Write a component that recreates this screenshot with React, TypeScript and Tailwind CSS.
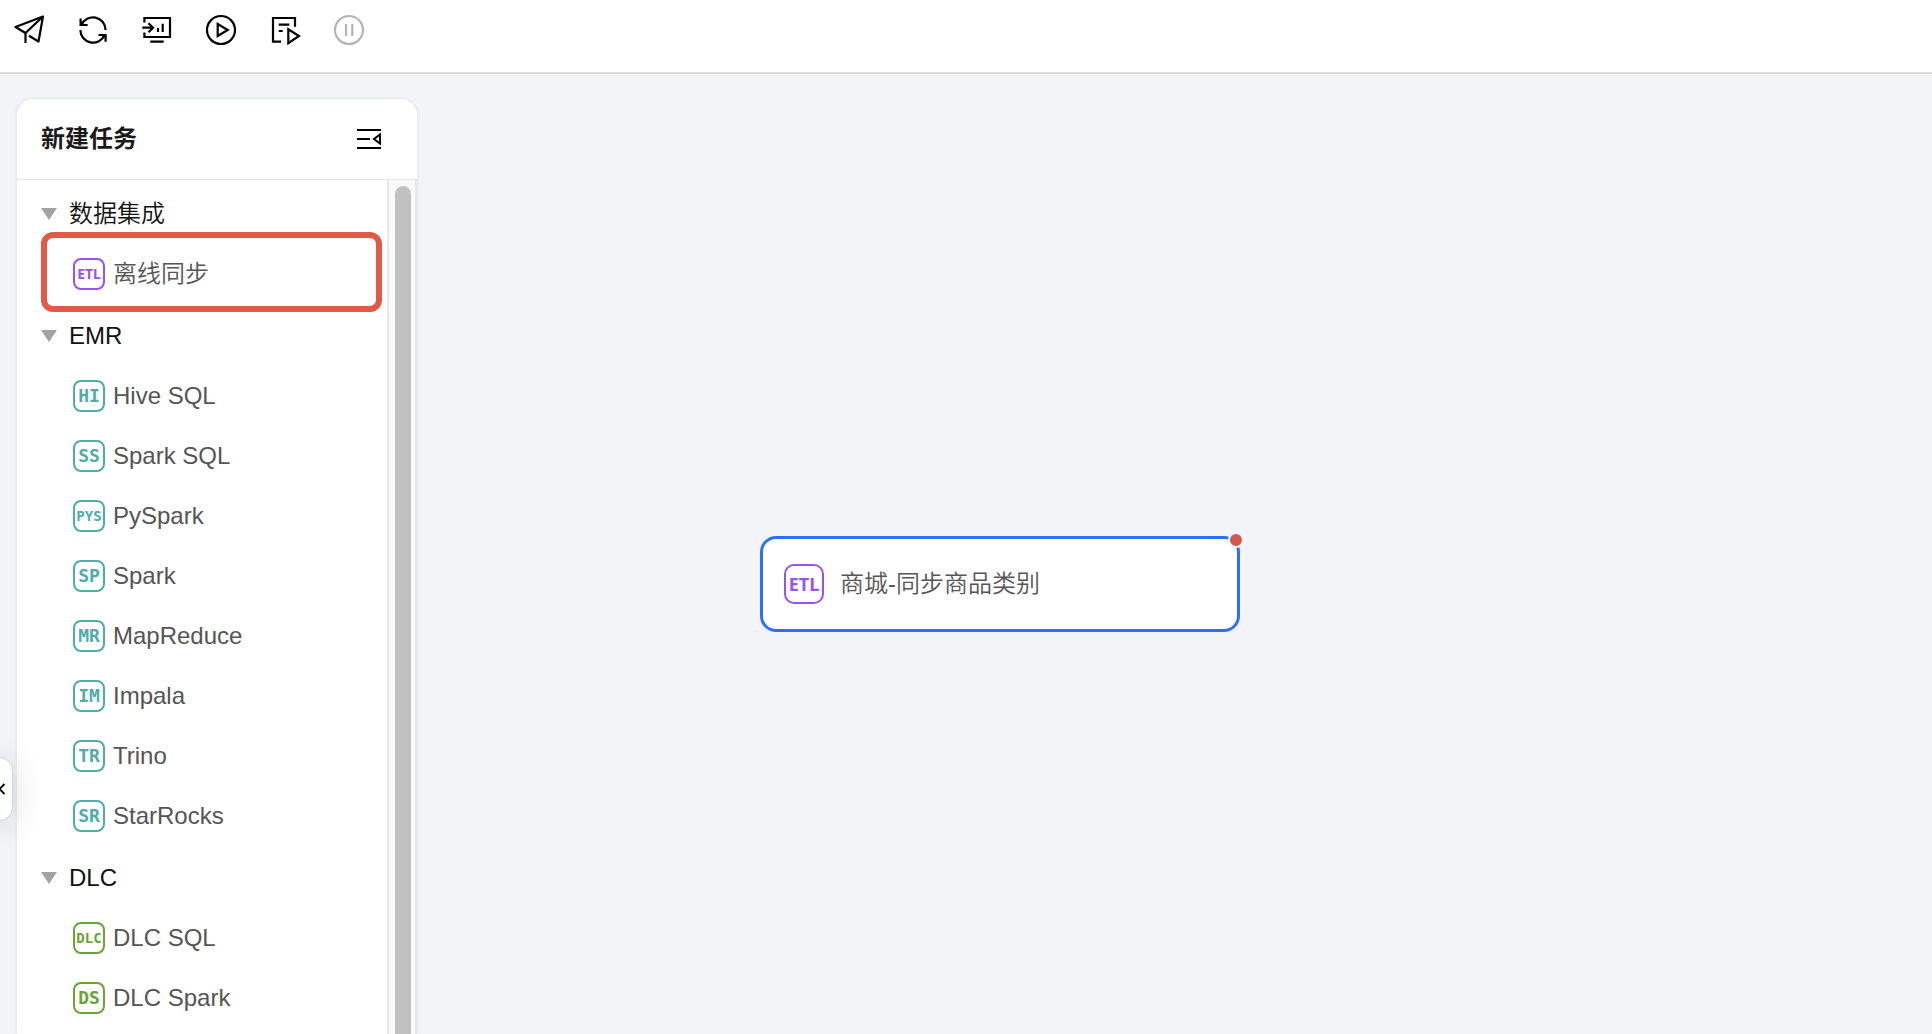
import { ReactNode, useState } from "react";

type Task = { tag: string; name: string; highlighted?: boolean };
type Group = { title: string; color: string; tasks: Task[] };

const groups: Group[] = [
  {
    title: "数据集成",
    color: "border-[#9b51f0] text-[#9b51f0]",
    tasks: [{ tag: "ETL", name: "离线同步", highlighted: true }],
  },
  {
    title: "EMR",
    color: "border-[#4cada9] text-[#4cada9]",
    tasks: [
      { tag: "HI", name: "Hive SQL" },
      { tag: "SS", name: "Spark SQL" },
      { tag: "PYS", name: "PySpark" },
      { tag: "SP", name: "Spark" },
      { tag: "MR", name: "MapReduce" },
      { tag: "IM", name: "Impala" },
      { tag: "TR", name: "Trino" },
      { tag: "SR", name: "StarRocks" },
    ],
  },
  {
    title: "DLC",
    color: "border-[#6aa436] text-[#6aa436]",
    tasks: [
      { tag: "DLC", name: "DLC SQL" },
      { tag: "DS", name: "DLC Spark" },
    ],
  },
];

function tagFont(tag: string) {
  if (tag === "ETL") return "font-['Noto_Sans',sans-serif] text-[14px]";
  if (tag.length > 2) return "font-['DejaVu_Sans_Mono',monospace] text-[14px]";
  return "font-['DejaVu_Sans_Mono',monospace] text-[18px]";
}

function ToolButton({
  label,
  disabled,
  children,
}: {
  label: string;
  disabled?: boolean;
  children: ReactNode;
}) {
  return (
    <button
      type="button"
      aria-label={label}
      disabled={disabled}
      className="size-8 text-black disabled:text-[#b5b5b5]"
    >
      <svg
        viewBox="0 0 32 32"
        className="size-8"
        fill="none"
        stroke="currentColor"
        strokeWidth="2.2"
      >
        {children}
      </svg>
    </button>
  );
}

function Toolbar() {
  return (
    <header className="flex h-[74px] shrink-0 items-start gap-8 border-b-2 border-[#dcdcdc] bg-white pt-[14px] pl-[13px]">
      <ToolButton label="提交">
        <path
          d="M12.5 29V19L30 2.5 2.5 13l10 6M30 2.5l-4.5 25-9.5-5.7"
          strokeLinejoin="round"
        />
      </ToolButton>
      <ToolButton label="刷新">
        <path d="M3.6 4.5V11h7M4.4 11A12.6 12.6 0 0 1 28.6 16M3.4 16A12.6 12.6 0 0 0 27.6 21M21.5 21h7.1v6.8" />
      </ToolButton>
      <ToolButton label="导入">
        <path d="M3.4 8.6V4H29v19H3.4v-4.6M1.3 13.7H12M7.5 9.2l4.5 4.5-4.5 4.5M17 14v4M21.7 9.7V18M9.3 27.6h13.4" />
      </ToolButton>
      <ToolButton label="运行">
        <circle cx="16" cy="16" r="14" />
        <path d="M12.7 10v12l10-6z" />
      </ToolButton>
      <ToolButton label="测试运行">
        <path d="M12 27.7H4V4h22v8.7M9.7 10.7h10.6M9.7 17h4M19.3 15.2v14L30 22z" />
      </ToolButton>
      <ToolButton label="暂停" disabled>
        <circle cx="16" cy="16" r="14" />
        <path d="M13 10v12M19.3 10v12" />
      </ToolButton>
    </header>
  );
}

function TaskGroup({ group }: { group: Group }) {
  const [open, setOpen] = useState(true);

  return (
    <li>
      <button
        type="button"
        aria-expanded={open}
        onClick={() => setOpen(!open)}
        className="flex h-[60px] w-full items-center gap-3 pl-6 text-[#111]"
      >
        <svg
          viewBox="0 0 16 12"
          className={open ? "h-3 w-4" : "h-3 w-4 -rotate-90"}
          fill="#a3a3a3"
        >
          <path d="M0 0h16L8 12z" />
        </svg>
        {group.title}
      </button>

      {open && (
        <ul>
          {group.tasks.map((task) => (
            <li key={task.name} className="relative">
              <button
                type="button"
                className="flex h-[60px] w-full items-center gap-2 pl-14 text-[#555]"
              >
                <span
                  className={`flex size-8 items-center justify-center rounded-lg border-2 leading-none font-bold ${group.color} ${tagFont(task.tag)}`}
                >
                  {task.tag}
                </span>
                {task.name}
              </button>
              {task.highlighted && (
                <div className="pointer-events-none absolute -top-3 right-[5px] -bottom-2 left-6 rounded-xl border-6 border-[#e05a49]" />
              )}
            </li>
          ))}
        </ul>
      )}
    </li>
  );
}

function TaskPanel() {
  return (
    <aside className="mt-[25px] ml-[17px] flex w-[400px] shrink-0 flex-col overflow-hidden rounded-t-2xl bg-white shadow-[0_0_4px_rgba(30,40,80,0.1)]">
      <div className="flex h-[81px] shrink-0 items-center justify-between border-b border-[#e5e6e8] pr-9 pl-6">
        <h2 className="font-bold text-[#1a1a1a]">新建任务</h2>
        <button type="button" aria-label="收起" className="size-6 text-black">
          <svg
            viewBox="0 0 24 24"
            className="size-6"
            fill="none"
            stroke="currentColor"
            strokeWidth="2"
          >
            <path d="M0 3h24M0 12h13M0 21h24M23 7.5v9L17 12z" />
          </svg>
        </button>
      </div>
      <div className="flex min-h-0 flex-1">
        <ul className="flex flex-1 flex-col gap-0.5 overflow-hidden pt-1">
          {groups.map((group) => (
            <TaskGroup key={group.title} group={group} />
          ))}
        </ul>
        {/* Scroll track */}
        <div className="flex w-[30px] justify-center border-x-2 border-[#e8e8e8] bg-[#fafafa] pt-1.5 pr-0.5 pl-1">
          <div className="w-4 rounded-t-full bg-[#c1c1c1]" />
        </div>
      </div>
    </aside>
  );
}

function App() {
  return (
    <div className="flex h-screen flex-col overflow-hidden bg-[#f2f4f8] font-['Liberation_Sans','Noto_Sans_CJK_SC',sans-serif] text-2xl font-[350]">
      <Toolbar />
      <main className="relative flex min-h-0 flex-1">
        <TaskPanel />

        <section aria-label="画布" className="relative flex-1">
          <div className="absolute top-[462px] left-[343px] flex h-24 w-[480px] items-center gap-4 rounded-2xl border-3 border-[#2f6ff7] bg-white pl-[21px] text-[#555]">
            <span className="flex size-10 items-center justify-center rounded-[10px] border-2 border-[#9b51f0] font-['Noto_Sans',sans-serif] text-[18px] leading-none font-bold text-[#9b51f0]">
              ETL
            </span>
            <span>商城-同步商品类别</span>
            <span className="absolute -top-[7px] -right-[7px] size-4 rounded-full border-2 border-[#f2f4f8] bg-[#d1574f]" />
          </div>
        </section>

        {/* Drawer handle, half hidden behind the left edge */}
        <button
          type="button"
          aria-label="收起侧栏"
          className="absolute top-[683px] -left-3.5 flex h-16 w-[27px] items-center justify-center rounded-[20px] border border-[#cfd3de] bg-white shadow-[0_4px_32px_rgba(0,0,0,0.14)]"
        >
          <svg
            viewBox="0 0 12 12"
            className="size-3"
            fill="none"
            stroke="#000"
            strokeWidth="1.8"
          >
            <path d="M10.5 1L5.5 6l5 5" />
          </svg>
        </button>
      </main>
    </div>
  );
}

export default App;
